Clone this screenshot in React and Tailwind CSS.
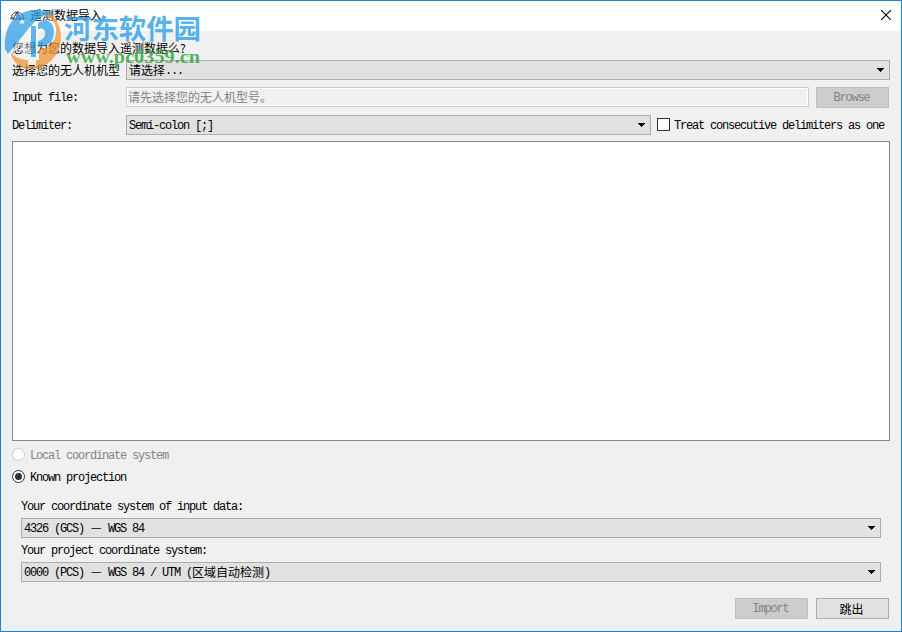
import clsx from 'clsx'

// Latin text sits on a 6px grid, Chinese text on a 12px one
function Latin({ children, className }) {
    return (
        <span className={clsx("inline-block pt-[2px] font-['Liberation_Mono',monospace] text-[12px] tracking-[-1.2px] whitespace-pre", className)}>
            {children}
        </span>
    )
}

function Combo({ className, children }) {
    return (
        <div className={clsx('flex h-5 items-center justify-between border border-[#adadad] bg-[#e1e1e1] pr-[5px] pl-[2px]', className)}>
            <div className="flex items-center whitespace-pre leading-[18px]">{children}</div>
            <svg width="7" height="4" viewBox="0 0 7 4" shapeRendering="crispEdges">
                <path d="M0 0h7v1H0zM1 1h5v1H1zM2 2h3v1H2zM3 3h1v1H3z" />
            </svg>
        </div>
    )
}

function Button({ disabled, children }) {
    return (
        <button
            type="button"
            disabled={disabled}
            className={clsx(
                'flex h-[21px] w-[73px] shrink-0 items-center justify-center border leading-[19px]',
                disabled ? 'border-[#bfbfbf] bg-[#cccccc] pr-[2px] text-[#838383]' : 'border-[#adadad] bg-[#e1e1e1] pr-[2px]'
            )}
        >
            {children}
        </button>
    )
}

function Radio({ checked, disabled, label }) {
    return (
        <label className={clsx('flex h-[22px] items-start gap-[5px] pt-[4px]', disabled && 'text-[#838383]')}>
            <span className={clsx('flex size-[13px] items-center justify-center rounded-full border bg-white', disabled ? 'border-[#cccccc]' : 'border-[#333333]')}>
                {checked && <span className="size-[7px] rounded-full bg-[#333333]" />}
            </span>
            <Latin className="leading-[13px]">{label}</Latin>
        </label>
    )
}

function Watermark() {
    return (
        <svg className="pointer-events-none absolute -top-px -left-px" width="210" height="76" viewBox="0 0 210 76">
            <g opacity="0.75">
                <path fill="#2f9fe8" d="M5 49C3 25 17 10 36 10C43 10 49 11 54 14C45 14 37 18 33 24L8 54z" />
                <path fill="#ffffff" fillOpacity="0.6" d="M7 56L31 25V56H22V43L9 59z" />
                <path fill="#2f9fe8" d="M31 26H36V57H31zM38 23C46 17 54 22 54 31C54 42 47 47 38 47V41C43 40 46 36 45 32C44 28 41 28 38 29z" />
                <path fill="#ffffff" fillOpacity="0.7" d="M36 26L38 23V57H36z" />
                <path fill="#f39433" d="M46 16C52 10 61 24 61 37C61 54 48 69 31 69C21 69 13 63 10 52C16 58 22 60 28 60V66H36V60H39V49C50 49 57 40 56 29C55 22 51 18 46 16z" />
            </g>
            <path fill="#ffffff" d="M22 19l1 2h2l-1.500 1 .5 2-2-1-2 1 .5-2-1.500-1h2z" />
            <text x="64" y="39" fontSize="27.5" fontWeight="700" fill="#2f9fe8" fillOpacity="0.82" fontFamily="'Noto Sans CJK SC', sans-serif" textLength="137">河东软件园</text>
            <text x="66" y="63" fontSize="19" fontWeight="700" fill="#36a83e" fillOpacity="0.85" fontFamily="'Liberation Serif', serif" textLength="134" lengthAdjust="spacingAndGlyphs">www.pc0359.cn</text>
        </svg>
    )
}

export default function App() {
    return (
        <div className="relative flex h-[632px] w-[902px] flex-col border border-[#1883d7] bg-[#f0f0f0] font-['Noto_Sans_CJK_SC',sans-serif] text-[12px] text-black">
            <header className="flex h-[30px] shrink-0 items-center bg-white pr-[10px] pl-[9px]">
                <svg width="15" height="11" viewBox="0 0 15 11" fill="none" stroke="#34345c" strokeWidth="1">
                    <path d="M1 8C1 4 4 1 7 1S14 4 14 8M7 1V8M7 1L3 8M7 1L11 8M1 8H14M2 6L5 9L7 7L10 9L13 6" />
                </svg>
                <h1 className="ml-[5px] h-[18px] leading-[16px]">遥测数据导入</h1>
                <svg className="mb-[2px] ml-auto" width="10" height="10" viewBox="0 0 10 10" stroke="#000000" strokeWidth="1.1">
                    <path d="M0 0L10 10M10 0L0 10" />
                </svg>
            </header>

            <main className="flex flex-1 flex-col px-[11px]">
                <p className="mt-[8px] h-[18px] leading-[18px]">您想为您的数据导入遥测数据么?</p>
                <div className="mt-[3px] flex h-5 items-center">
                    <span className="w-[114px] shrink-0">选择您的无人机机型</span>
                    <Combo className="flex-1">请选择<Latin>...</Latin></Combo>
                </div>
                <div className="mt-[7px] flex h-[21px]">
                    <Latin className="w-[114px] shrink-0 leading-[19px]">Input file:</Latin>
                    <div className="mr-[7px] h-5 flex-1 border border-[#cccccc] bg-[#f0f0f0] pl-px leading-[18px] text-[#838383] inset-ring inset-ring-white">
                        请先选择您的无人机型号。
                    </div>
                    <Button disabled><Latin>Browse</Latin></Button>
                    <span className="w-px" />
                </div>
                <div className="mt-[7px] flex h-5 items-center">
                    <Latin className="w-[114px] shrink-0">Delimiter:</Latin>
                    <Combo className="w-[525px]"><Latin>Semi-colon [;]</Latin></Combo>
                    <span className="mt-[3px] mr-[4px] ml-[6px] size-[13px] self-start border border-[#333333] bg-white" />
                    <Latin>Treat consecutive delimiters as one</Latin>
                </div>
                <div className="mt-[6px] h-[300px] border border-[#828790] bg-white" />

                <div className="mt-[3px]">
                    <Radio disabled label="Local coordinate system" />
                    <Radio checked label="Known projection" />
                </div>

                <div className="mt-[9px] flex flex-col px-[9px]">
                    <Latin className="h-5 leading-4">Your coordinate system of input data:</Latin>
                    <Combo className="mt-px"><Latin>4326 (GCS) </Latin><span className="mb-[3px] w-3 text-center">—</span><Latin> WGS 84</Latin></Combo>
                    <Latin className="mt-[3px] h-5 leading-4">Your project coordinate system:</Latin>
                    <Combo className="mt-px">
                        <Latin>0000 (PCS) </Latin><span className="mb-[3px] w-3 text-center">—</span><Latin> WGS 84 / UTM (</Latin>区域自动检测<Latin>)</Latin>
                    </Combo>
                </div>

                <div className="mt-4 flex justify-end gap-[8px] pr-px">
                    <Button disabled><Latin>Import</Latin></Button>
                    <Button>跳出</Button>
                </div>
            </main>

            <Watermark />
        </div>
    )
}
